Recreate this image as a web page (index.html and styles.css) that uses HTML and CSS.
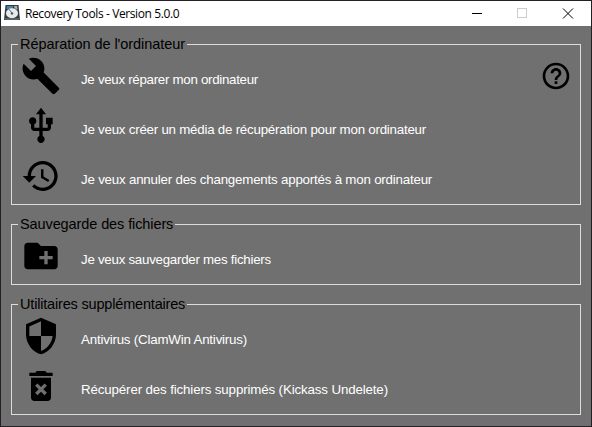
FILE: index.html
```html
<!DOCTYPE html>
<html lang="fr">
<head>
<meta charset="utf-8">
<title>Recovery Tools - Version 5.0.0</title>
<link rel="stylesheet" href="styles.css">
</head>
<body>
<div class="window">
  <header class="titlebar">
    <svg class="app-icon" viewBox="0 0 16 16"><path d="M1.500 0h13L16 15H0z" fill="#343b40"/><path d="M3 1h6v3H2.500z" fill="#4182aa"/><path d="M10 1h3l.5 4-3-2z" fill="#a9b4ba"/><ellipse cx="8" cy="8.300" rx="6" ry="5" fill="#e8ebeb"/><path d="M4 3l4 5" stroke="#626a6e"/><circle cx="8" cy="8.500" r="1.300" fill="#555e62"/><path d="M1 13h14v2H1z" fill="#596167"/></svg>
    <span class="title">Recovery Tools - Version 5.0.0</span>
    <svg class="controls" viewBox="0 0 138 25" fill="none" stroke="#000" shape-rendering="crispEdges"><path d="M19 12.500h10"/><path d="M64.500 7.500h9v9h-9z" stroke="#ccc"/><path d="M110 7.500l10 10M120 7.500l-10 10" shape-rendering="auto"/></svg>
  </header>
  <main class="content">
    <fieldset class="group">
      <legend class="l1">Réparation de l'ordinateur</legend>
      <div class="row">
        <svg class="icon" viewBox="0 0 24 24"><path d="M22.700 19l-9.100-9.100c.9-2.300.4-5-1.500-6.900-2-2-5-2.400-7.400-1.300L9 6 6 9 1.600 4.700C.4 7.100.9 10.100 2.900 12.100c1.900 1.900 4.600 2.400 6.900 1.500l9.100 9.100c.4.4 1 .4 1.400 0l2.300-2.300c.5-.4.5-1.100.1-1.400z"/></svg>
        <span class="label t1">Je veux réparer mon ordinateur</span>
        <svg class="help" viewBox="0 0 24 24"><path d="M11 18h2v-2h-2v2zm1-16C6.480 2 2 6.480 2 12s4.480 10 10 10 10-4.480 10-10S17.520 2 12 2zm0 18c-4.410 0-8-3.590-8-8s3.590-8 8-8 8 3.590 8 8-3.590 8-8 8zm0-14c-2.210 0-4 1.790-4 4h2c0-1.100.9-2 2-2s2 .9 2 2c0 2-3 1.750-3 5h2c0-2.250 3-2.500 3-5 0-2.210-1.790-4-4-4z"/></svg>
      </div>
      <div class="row">
        <svg class="icon" viewBox="0 0 24 24"><path d="M15 7v4h1v2h-3V5h2l-3-4-3 4h2v8H8v-2.070c.7-.37 1.200-1.080 1.200-1.930 0-1.210-.99-2.200-2.200-2.200-1.210 0-2.200.99-2.200 2.200 0 .85.5 1.560 1.200 1.930V13c0 1.110.89 2 2 2h3v3.050c-.71.37-1.200 1.100-1.200 1.950 0 1.220.99 2.200 2.200 2.200 1.210 0 2.200-.98 2.200-2.200 0-.85-.49-1.580-1.200-1.950V15h3c1.110 0 2-.89 2-2v-2h1V7h-4z"/></svg>
        <span class="label t2">Je veux créer un média de récupération pour mon ordinateur</span>
      </div>
      <div class="row">
        <svg class="icon" viewBox="0 0 24 24"><path d="M13 3c-4.970 0-9 4.030-9 9H1l3.890 3.890.07.14L9 12H6c0-3.870 3.130-7 7-7s7 3.130 7 7-3.130 7-7 7c-1.930 0-3.680-.79-4.940-2.060l-1.420 1.420C8.270 19.990 10.510 21 13 21c4.970 0 9-4.030 9-9s-4.030-9-9-9zm-1 5v5l4.280 2.540.72-1.210-3.500-2.080V8H12z"/></svg>
        <span class="label t3">Je veux annuler des changements apportés à mon ordinateur</span>
      </div>
    </fieldset>
    <fieldset class="group">
      <legend class="l2">Sauvegarde des fichiers</legend>
      <div class="row">
        <svg class="icon" viewBox="0 0 24 24"><path d="M20 6h-8l-2-2H4c-1.110 0-1.990.89-1.990 2L2 18c0 1.110.89 2 2 2h16c1.110 0 2-.89 2-2V8c0-1.110-.89-2-2-2zm-1 8h-3v3h-2v-3h-3v-2h3V9h2v3h3v2z"/></svg>
        <span class="label t4">Je veux sauvegarder mes fichiers</span>
      </div>
    </fieldset>
    <fieldset class="group">
      <legend class="l3">Utilitaires supplémentaires</legend>
      <div class="row">
        <svg class="icon" viewBox="0 0 24 24"><path d="M12 1L3 5v6c0 5.550 3.840 10.740 9 12 5.160-1.260 9-6.450 9-12V5l-9-4zm0 10.990h7c-.53 4.120-3.280 7.790-7 8.940V12H5V6.300l7-3.110v8.800z"/></svg>
        <span class="label t5">Antivirus (ClamWin Antivirus)</span>
      </div>
      <div class="row">
        <svg class="icon" viewBox="0 0 24 24"><path fill-rule="evenodd" d="M6 19c0 1.100.9 2 2 2h8c1.100 0 2-.9 2-2V7H6v12zm2.460-7.120l1.410-1.410L12 12.590l2.120-2.120 1.410 1.410L13.410 14l2.120 2.120-1.410 1.410L12 15.410l-2.120 2.120-1.410-1.410L10.590 14l-2.130-2.120zM15.500 4l-1-1h-5l-1 1H5v2h14V4z"/></svg>
        <span class="label t6">Récupérer des fichiers supprimés (Kickass Undelete)</span>
      </div>
    </fieldset>
  </main>
</div>
</body>
</html>
```
FILE: styles.css
```css
* { box-sizing: border-box; }
body { margin: 0; background: #232124; overflow: hidden; }
.window {
  width: 592px;
  height: 427px;
  border: 1px solid #232124;
  background: #707070;
  font-family: "Liberation Sans", Arial, sans-serif;
}
.titlebar {
  height: 25px;
  background: #fff;
  display: flex;
  align-items: center;
  padding-left: 3px;
}
.app-icon { width: 16px; height: 16px; margin-top: -1px; }
.title {
  margin-left: 5px;
  font: 12px/16px "Open Sans", "Noto Sans", sans-serif;
  color: #000;
  white-space: nowrap;
  letter-spacing: -0.39px;
}
.controls { width: 138px; height: 25px; margin-left: auto; }
.content {
  padding: 10px 10px 0;
  display: flex;
  flex-direction: column;
  gap: 11px;
}
.group {
  margin: 0;
  min-width: 0;
  padding: 0 0 1px 9px;
  border: 1px solid #dcdcdc;
}
.group legend {
  margin-left: -3px;
  padding: 0 2px;
  height: 17px;
  font-size: 14.5px;
  line-height: 17px;
  color: #000;
  white-space: nowrap;
}
.group .l1 { letter-spacing: -0.05px; }
.group .l2 { letter-spacing: -0.1px; }
.group .l3 { letter-spacing: -0.18px; }
.row { height: 50px; display: flex; align-items: center; }
.icon { width: 40px; height: 40px; margin-top: -4px; flex: none; }
.label {
  margin-left: 20px;
  padding-top: 3px;
  font-size: 13.33px;
  line-height: 16px;
  color: #fff;
  white-space: nowrap;
}
.t1 { letter-spacing: -0.3px; }
.t2 { letter-spacing: -0.235px; }
.t3 { letter-spacing: -0.21px; }
.t4 { letter-spacing: -0.27px; }
.t5 { letter-spacing: -0.2px; }
.t6 { letter-spacing: -0.14px; }
.help { width: 32px; height: 32px; margin: -4px 8px 0 auto; }
```
